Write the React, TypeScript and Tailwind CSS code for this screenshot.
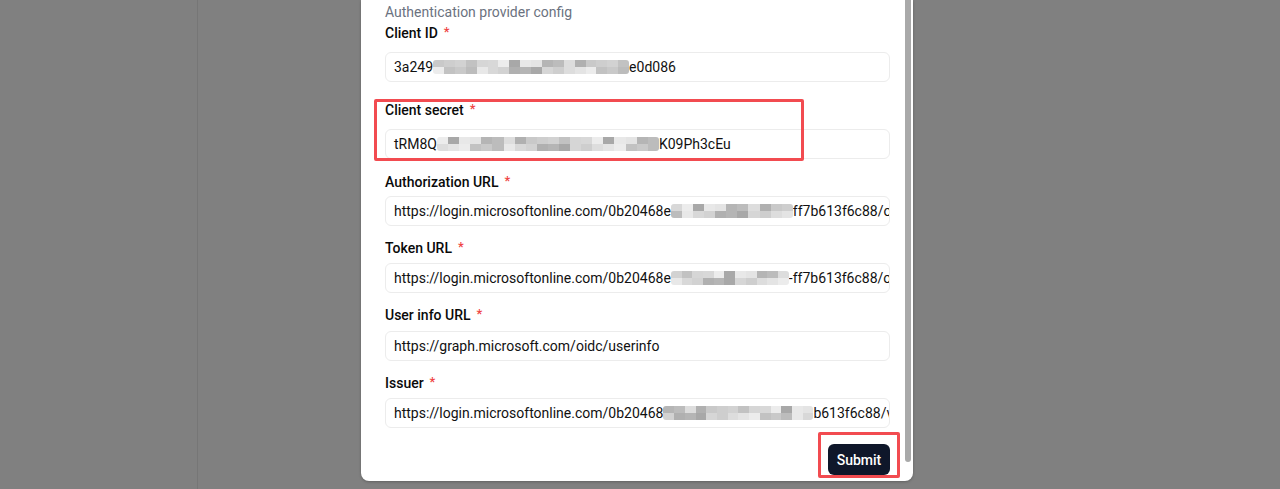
import type { ReactNode } from 'react';

const shades = [
  '#e4e4e4', '#c9c9c9', '#d8d8d8', '#b5b5b5', '#cecece', '#ececec', '#bcbcbc',
  '#d2d2d2', '#a8a8a8', '#dddddd', '#c2c2c2', '#e8e8e8', '#b0b0b0', '#d6d6d6',
];

function Blur({ width, seed = 0 }: { width: number; seed?: number }) {
  const cols = Math.max(1, Math.round(width / 11));
  return (
    <span
      className="inline-flex h-[14px] shrink-0 overflow-hidden rounded-[3px] blur-[0.4px]"
      style={{ width }}
    >
      {Array.from({ length: cols }).map((_, i) => (
        <span key={i} className="flex flex-1 flex-col">
          <span className="flex-1" style={{ background: shades[(i * 3 + seed) % shades.length] }} />
          <span className="flex-1" style={{ background: shades[(i * 5 + seed + 4) % shades.length] }} />
        </span>
      ))}
    </span>
  );
}

function Label({ children }: { children: ReactNode }) {
  return (
    <div className="flex h-5 items-center text-sm font-medium leading-5 text-[#0a0a0a]">
      {children}
      <span className="ml-[6px] -mt-[3px] text-[13px] text-[#ef4444]">*</span>
    </div>
  );
}

function Field({ children }: { children: ReactNode }) {
  return (
    <div className="flex h-[30px] items-center overflow-hidden whitespace-nowrap rounded-md border border-[#ececec] bg-white px-2 text-sm text-[#111111]">
      {children}
    </div>
  );
}

export default function App() {
  return (
    <div
      className="relative h-[489px] w-[1280px] overflow-hidden bg-[#808080]"
      style={{ fontFamily: 'Roboto, "Noto Sans", sans-serif' }}
    >
      <div className="h-full w-[198px] border-r border-[#767676]" />

      <div className="absolute left-[361px] top-0 w-[552px] rounded-b-lg bg-white pb-[6px] pl-6 pr-[23px] pt-[2px] shadow-[0_1px_3px_rgba(0,0,0,0.25)]">
        <div className="h-5 text-sm leading-5 text-[#6b7280]">Authentication provider config</div>

        <div className="mt-[1px]">
          <Label>Client ID</Label>
          <div className="mt-[9px]">
            <Field>
              <span>3a249</span>
              <Blur width={196} seed={1} />
              <span>e0d086</span>
            </Field>
          </div>
        </div>

        <div className="mt-[18px]">
          <Label>Client secret</Label>
          <div className="mt-[9px]">
            <Field>
              <span>tRM8Q</span>
              <Blur width={222} seed={5} />
              <span>K09Ph3cEu</span>
            </Field>
          </div>
        </div>

        <div className="mt-[13px]">
          <Label>Authorization URL</Label>
          <div className="mt-[4px]">
            <Field>
              <span>https://login.microsoftonline.com/0b20468e</span>
              <Blur width={122} seed={2} />
              <span>ff7b613f6c88/oauth2/v2.0/authorize</span>
            </Field>
          </div>
        </div>

        <div className="mt-[12px]">
          <Label>Token URL</Label>
          <div className="mt-[5px]">
            <Field>
              <span>https://login.microsoftonline.com/0b20468e</span>
              <Blur width={118} seed={7} />
              <span>-ff7b613f6c88/oauth2/v2.0/token</span>
            </Field>
          </div>
        </div>

        <div className="mt-[12px]">
          <Label>User info URL</Label>
          <div className="mt-[6px]">
            <Field>
              <span>https://graph.microsoft.com/oidc/userinfo</span>
            </Field>
          </div>
        </div>

        <div className="mt-[12px]">
          <Label>Issuer</Label>
          <div className="mt-[5px]">
            <Field>
              <span>https://login.microsoftonline.com/0b20468</span>
              <Blur width={150} seed={3} />
              <span>b613f6c88/v2.0</span>
            </Field>
          </div>
        </div>

        <div className="mt-4 flex justify-end">
          <button className="h-[31px] w-[62px] rounded-md bg-[#0f172a] text-sm font-medium text-white">
            Submit
          </button>
        </div>

        {/* overlay scrollbar */}
        <div className="absolute right-[2px] top-0 h-[462px] w-[6px] rounded-b-full bg-[#a9a9a9]" />

        {/* red annotation boxes */}
        <div className="absolute left-[13px] top-[99px] h-[62px] w-[430px] rounded-[2px] border-[3px] border-[#f24b50]" />
        <div className="absolute left-[457px] top-[432px] h-[46px] w-[82px] rounded-[2px] border-[3px] border-[#f24b50]" />
      </div>
    </div>
  );
}
